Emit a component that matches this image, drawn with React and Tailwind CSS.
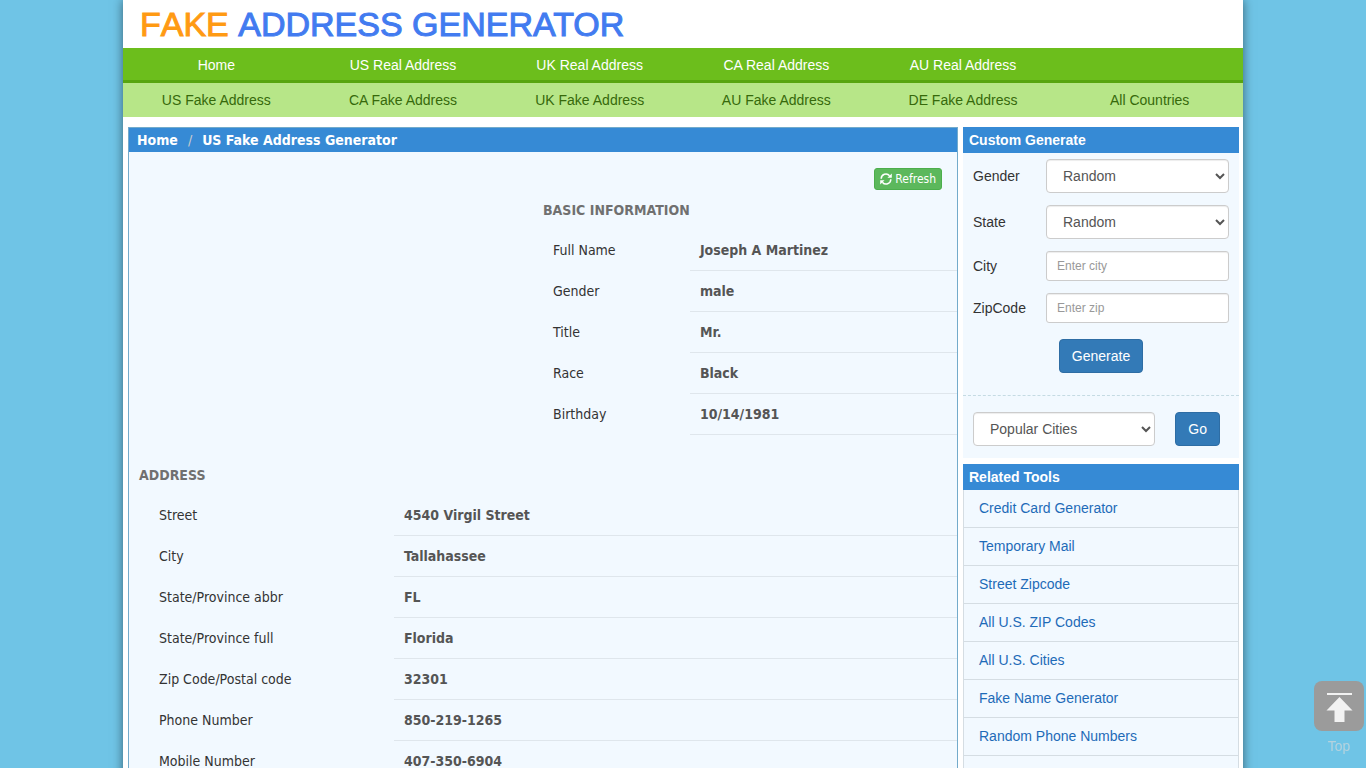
import React from 'react';

const topLinks = ['Home', 'US Real Address', 'UK Real Address', 'CA Real Address', 'AU Real Address'];

const subLinks = [
  'US Fake Address',
  'CA Fake Address',
  'UK Fake Address',
  'AU Fake Address',
  'DE Fake Address',
  'All Countries',
];

const basicInfo = [
  ['Full Name', 'Joseph A Martinez'],
  ['Gender', 'male'],
  ['Title', 'Mr.'],
  ['Race', 'Black'],
  ['Birthday', '10/14/1981'],
];

const addressInfo = [
  ['Street', '4540 Virgil Street'],
  ['City', 'Tallahassee'],
  ['State/Province abbr', 'FL'],
  ['State/Province full', 'Florida'],
  ['Zip Code/Postal code', '32301'],
  ['Phone Number', '850-219-1265'],
  ['Mobile Number', '407-350-6904'],
];

const tools = [
  'Credit Card Generator',
  'Temporary Mail',
  'Street Zipcode',
  'All U.S. ZIP Codes',
  'All U.S. Cities',
  'Fake Name Generator',
  'Random Phone Numbers',
];

const NavRow = ({ links, label, className }) => (
  <nav aria-label={label} className={className}>
    <ul className="grid grid-cols-6 text-center">
      {links.map((link) => (
        <li key={link}>
          <a href="#" className="block leading-[34px]">{link}</a>
        </li>
      ))}
    </ul>
  </nav>
);

const InfoTable = ({ title, rows, colClass, labelClass }) => (
  <table className="w-full table-fixed border-collapse text-left leading-5">
    <colgroup>
      <col className={colClass} />
      <col />
    </colgroup>
    <thead>
      <tr>
        <th colSpan={2} className="h-10 pl-[10px] font-bold text-[#707070]">{title}</th>
      </tr>
    </thead>
    <tbody>
      {rows.map(([label, value]) => (
        <tr key={label}>
          <th scope="row" className={`${labelClass} py-[10px] font-normal text-[#333]`}>{label}</th>
          <td className="border-b border-[#dfe6ec] p-[10px] font-bold text-[#555]">{value}</td>
        </tr>
      ))}
    </tbody>
  </table>
);

const Select = ({ id, option, ...props }) => (
  <select
    id={id}
    className="h-[34px] w-full rounded border border-[#ccc] bg-white px-3 text-[#555] shadow-[inset_0_1px_1px_rgba(0,0,0,0.075)]"
    {...props}
  >
    <option>{option}</option>
  </select>
);

const Field = ({ id, label, children }) => (
  <div className="flex items-center">
    <label htmlFor={id} className="w-[73px] shrink-0 text-[#333]">{label}</label>
    {children}
  </div>
);

const TextInput = ({ id, placeholder }) => (
  <input
    id={id}
    type="text"
    placeholder={placeholder}
    className="h-[30px] w-full min-w-0 rounded-[3px] border border-[#ccc] bg-white px-[10px] text-xs text-[#555] shadow-[inset_0_1px_1px_rgba(0,0,0,0.075)] placeholder:text-[#999]"
  />
);

const PanelTitle = ({ children }) => (
  <h2 className="bg-[#368ad5] px-[6px] font-bold leading-[26px] text-white">{children}</h2>
);

const RefreshIcon = () => (
  <svg viewBox="0 0 12 12" className="size-3" aria-hidden="true">
    <path
      d="M1.200 5.800A4.700 4.700 0 0 1 9.600 2.800M10.800 6.200A4.700 4.700 0 0 1 2.400 9.200"
      fill="none"
      stroke="currentColor"
      strokeWidth="1.500"
    />
    <path d="M11.800.4v4.400H7.400zM.2 11.600V7.200h4.400z" fill="currentColor" />
  </svg>
);

const Sidebar = () => (
  <aside className="w-[276px] shrink-0">
    <section className="bg-[#f2f9ff]">
      <PanelTitle>Custom Generate</PanelTitle>
      <form className="space-y-3 border-b border-dashed border-[#c5dbe3] px-[10px] pt-[6px] pb-[22px]">
        <Field id="gender" label="Gender">
          <Select id="gender" option="Random" />
        </Field>
        <Field id="state" label="State">
          <Select id="state" option="Random" />
        </Field>
        <Field id="city" label="City">
          <TextInput id="city" placeholder="Enter city" />
        </Field>
        <Field id="zip" label="ZipCode">
          <TextInput id="zip" placeholder="Enter zip" />
        </Field>
        <div className="flex justify-center pt-1">
          <button type="button" className="h-[34px] rounded border border-[#2e6da4] bg-[#337ab7] px-3 text-white">Generate</button>
        </div>
      </form>
      <div className="flex gap-5 pt-4 pr-[19px] pb-3 pl-[10px]">
        <Select id="popular" option="Popular Cities" aria-label="Popular Cities" />
        <button type="button" className="h-[34px] rounded border border-[#2e6da4] bg-[#337ab7] px-3 text-white">Go</button>
      </div>
    </section>
    <section className="mt-[6px] bg-[#f2f9ff]">
      <PanelTitle>Related Tools</PanelTitle>
      <ul className="border-x border-[#d5dde3] pb-10">
        {tools.map((tool) => (
          <li key={tool} className="border-b border-[#d5dde3]">
            <a href="#" className="block px-[15px] leading-[37px] text-[#1e6bb8]">{tool}</a>
          </li>
        ))}
      </ul>
    </section>
  </aside>
);

const BackToTop = () => (
  <a href="#" className="fixed right-[2px] bottom-3 flex flex-col items-center text-[#b4d2de]">
    <svg viewBox="0 0 50 50" className="size-[50px]" aria-hidden="true">
      <rect width="50" height="50" rx="8" fill="#9b9b9b" />
      <path d="M13 12h25v2H13zM25.500 16 38.500 29.500H30.500V41H20.500V29.500H12.500z" fill="#f2f2f2" />
    </svg>
    <span className="mt-[5px] leading-5">Top</span>
  </a>
);

export default function App() {
  return (
    <div className="min-h-screen overflow-hidden bg-[#6fc4e6] font-['Liberation_Sans',Arial,sans-serif] text-sm leading-5">
      <div className="mx-auto min-h-screen max-w-[1120px] bg-white shadow-[0_0_10px_rgba(0,0,0,0.5)]">
        <header>
          <h1 className="h-12 px-[17px] text-[34px] leading-[48px] text-[#427bf0] [-webkit-text-stroke:1px_currentColor]">
            <span className="text-[#ff9a13] [font-kerning:none]">FAKE </span>ADDRESS GENERATOR
          </h1>
          <NavRow
            label="Real addresses"
            links={topLinks}
            className="h-[35px] border-b-[3px] border-[#57a50f] bg-[#6cbe1c] text-white"
          />
          <NavRow label="Fake addresses" links={subLinks} className="bg-[#b7e688] text-[#36690b]" />
        </header>

        <div className="flex items-start gap-[5px] pt-[10px] pr-1 pl-[5px]">
          <main className="min-w-0 flex-1 border border-[#73abcb] bg-[#f2f9ff] pb-10 font-['DejaVu_Sans_Condensed',Tahoma,sans-serif]">
            <div className="flex h-6 items-center bg-[#368ad5] px-2 font-bold text-white">
              <a href="#">Home</a>
              <span className="px-[10px] font-normal text-[#ccc]">/</span>
              <span>US Fake Address Generator</span>
            </div>
            <div className="flex justify-end pt-4 pr-[15px]">
              <button type="button" className="flex h-[22px] items-center gap-[3px] rounded-[3px] border border-[#4cae4c] bg-[#5cb85c] px-[5px] text-xs text-white">
                <RefreshIcon />
                Refresh
              </button>
            </div>
            <div className="ml-auto w-[424px]">
              <InfoTable title="BASIC INFORMATION" rows={basicInfo} colClass="w-[37%]" labelClass="pl-5" />
            </div>
            <div className="mt-5">
              <InfoTable title="ADDRESS" rows={addressInfo} colClass="w-[32%]" labelClass="pl-[30px]" />
            </div>
          </main>
          <Sidebar />
        </div>
      </div>
      <BackToTop />
    </div>
  );
}
